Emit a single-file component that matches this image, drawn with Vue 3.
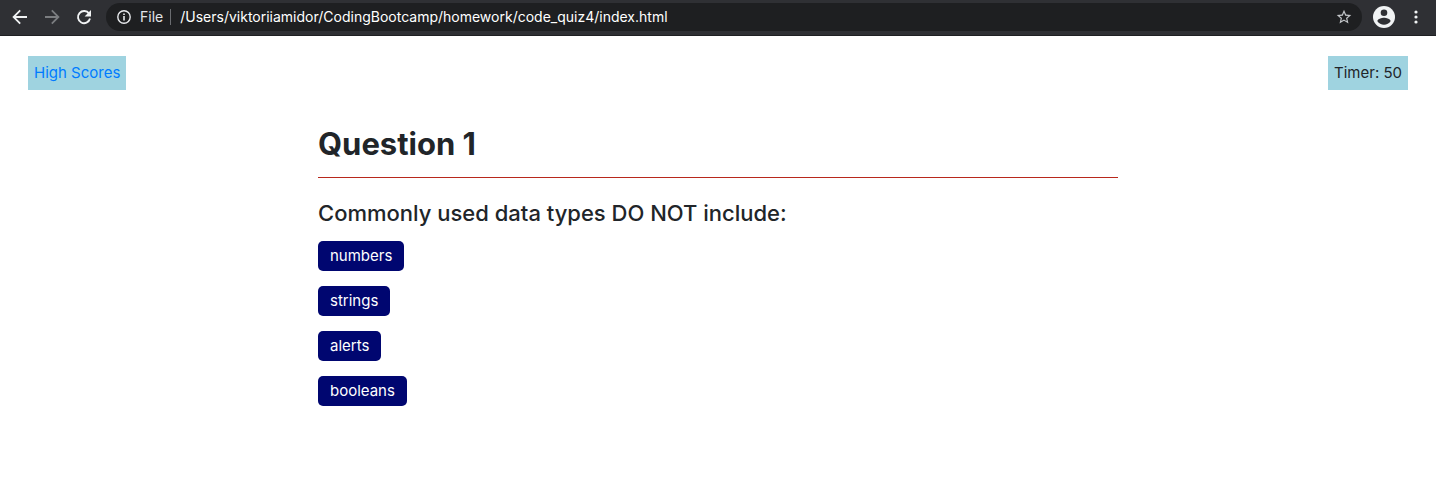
<script setup>
import { ref } from 'vue'

const address = '/Users/viktoriiamidor/CodingBootcamp/homework/code_quiz4/index.html'
const secondsLeft = ref(50)
const answers = ['numbers', 'strings', 'alerts', 'booleans']
</script>

<template>
  <div class="window">
    <header class="toolbar">
      <button class="icon-button" type="button" aria-label="Back">
        <svg width="16" height="16" viewBox="0 0 16 16" fill="none" stroke="#f1f3f4" stroke-width="1.8">
          <path d="M15 8H2M8.2 1.4L1.6 8l6.6 6.6" />
        </svg>
      </button>
      <button class="icon-button" type="button" aria-label="Forward">
        <svg width="16" height="16" viewBox="0 0 16 16" fill="none" stroke="#7b7d80" stroke-width="1.8">
          <path d="M1 8h13M7.8 1.4L14.4 8l-6.6 6.6" />
        </svg>
      </button>
      <button class="icon-button" type="button" aria-label="Reload">
        <svg width="16" height="16" viewBox="0 0 16 16">
          <path d="M13.1 4.6A6.1 6.1 0 1 0 14 9.6" fill="none" stroke="#f1f3f4" stroke-width="1.9" />
          <path d="M15 1v6.4H8.6z" fill="#f1f3f4" />
        </svg>
      </button>
      <div class="address-bar">
        <svg class="info" width="14" height="14" viewBox="0 0 14 14">
          <circle cx="7" cy="7" r="6.2" fill="none" stroke="#e8eaed" stroke-width="1.4" />
          <path d="M6.2 6h1.6v4.4H6.2zM6.2 3.4h1.6V5H6.2z" fill="#e8eaed" />
        </svg>
        <span class="scheme">File</span>
        <span class="divider"></span>
        <span class="address">{{ address }}</span>
        <button class="icon-button" type="button" aria-label="Bookmark this page">
          <svg width="16" height="16" viewBox="1 1 22 22" fill="#c4c7ca">
            <path d="M22 9.24l-7.19-.62L12 2 9.19 8.63 2 9.24l5.46 4.73L5.82 21 12 17.27 18.18 21l-1.63-7.03L22 9.24zM12 15.4l-3.76 2.27 1-4.28-3.32-2.88 4.38-.38L12 6.1l1.71 4.04 4.38.38-3.32 2.88 1 4.28L12 15.4z" />
          </svg>
        </button>
      </div>
      <button class="icon-button" type="button" aria-label="Profile">
        <svg width="22" height="22" viewBox="0 0 22 22">
          <circle cx="11" cy="11" r="11" fill="#f1f3f4" />
          <circle cx="11" cy="6.8" r="3.3" fill="#2f3034" />
          <path d="M4.4 15.2c0-2.2 4.4-3.4 6.6-3.4s6.6 1.2 6.6 3.4a7.9 7.9 0 0 1-13.2 0z" fill="#2f3034" />
        </svg>
      </button>
      <button class="icon-button menu" type="button" aria-label="Menu">
        <svg width="4" height="14" viewBox="0 0 4 14" fill="#f1f3f4">
          <circle cx="2" cy="2" r="1.6" />
          <circle cx="2" cy="7" r="1.6" />
          <circle cx="2" cy="12" r="1.6" />
        </svg>
      </button>
    </header>

    <nav class="status">
      <a class="tag" href="#scores">High Scores</a>
      <span class="tag">Timer: {{ secondsLeft }}</span>
    </nav>

    <main class="quiz">
      <h1>Question 1</h1>
      <h2>Commonly used data types DO NOT include:</h2>
      <div class="answers">
        <button v-for="answer in answers" :key="answer" class="answer" type="button">{{ answer }}</button>
      </div>
    </main>
  </div>
</template>

<style>
body {
  background: #fff;
}
</style>

<style scoped>
.window {
  font-family: Inter, "Liberation Sans", sans-serif;
  font-size: 15px;
  line-height: 24px;
  color: #212529;
}

.toolbar {
  display: flex;
  align-items: center;
  gap: 16px;
  box-sizing: border-box;
  height: 36px;
  padding: 0 18px 2px 12px;
  background: #2f3034;
  border-bottom: 1px solid #1f2023;
}

.icon-button {
  display: flex;
  flex: none;
  padding: 0;
  border: 0;
  background: none;
}

.address-bar {
  display: flex;
  flex: 1;
  align-items: center;
  height: 28px;
  margin-right: -5px;
  margin-left: -2px;
  padding: 0 10px 0 11px;
  border-radius: 14px;
  background: #1e1f21;
  color: #fff;
  font-size: 14px;
}

.info {
  flex: none;
}

.scheme {
  margin-left: 9px;
  color: #e2e4e7;
}

.divider {
  width: 1px;
  height: 16px;
  margin: 0 9px 0 7px;
  background: #6a6c70;
}

.address {
  flex: 1;
  min-width: 0;
  overflow: hidden;
  white-space: nowrap;
}

.menu {
  margin-left: 3px;
}

.status {
  display: flex;
  justify-content: space-between;
  padding: 20px 28px 0;
}

.tag {
  padding: 5px 6px;
  background: #9fd3e0;
  text-decoration: none;
}

a.tag {
  color: #007bff;
}

.quiz {
  max-width: 800px;
  margin: 34px auto 0;
}

h1 {
  margin: 0 0 20px;
  padding-bottom: 13px;
  border-bottom: 1px solid #b8281c;
  font-size: 31px;
  font-weight: 700;
  line-height: 40px;
}

h2 {
  margin: 0 0 13px;
  font-size: 22px;
  font-weight: 500;
  line-height: 30px;
}

.answers {
  display: flex;
  flex-direction: column;
  align-items: flex-start;
  gap: 15px;
}

.answer {
  height: 30px;
  padding: 0 12px;
  border: 0;
  border-radius: 5px;
  background: #000670;
  color: #fff;
  font: inherit;
}
</style>
